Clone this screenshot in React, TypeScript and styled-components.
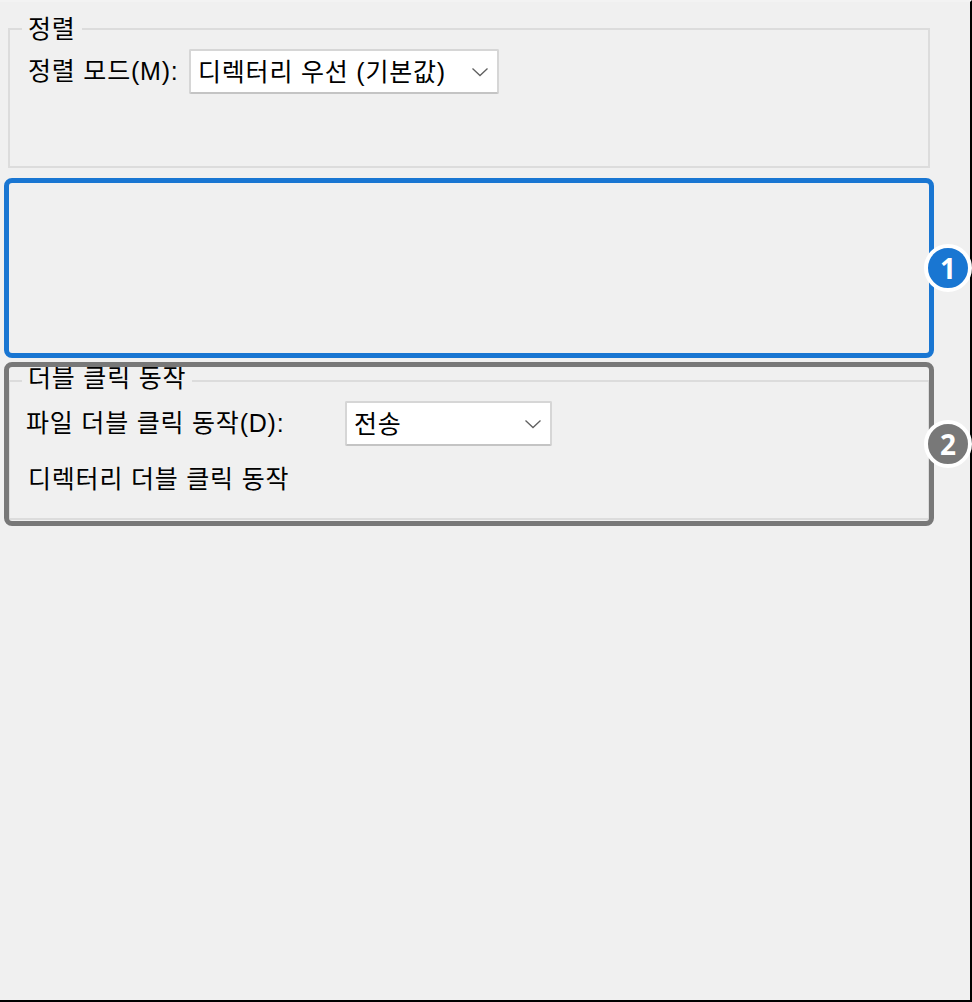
import styled, { createGlobalStyle } from "styled-components";

const GlobalStyle = createGlobalStyle`
  html, body {
    margin: 0;
    padding: 0;
    overflow: hidden;
    background: #f0f0f0;
  }
`;

const Page = styled.div`
  position: relative;
  box-sizing: border-box;
  width: 972px;
  height: 1002px;
  padding-top: 13px;
  background: #f0f0f0;
  border-top: 2px solid #f3f3f3;
  border-right: 2px solid #000;
  border-bottom: 2px solid #000;
  font-family: "Liberation Sans", "Noto Sans CJK KR", sans-serif;
  font-size: 25px;
  letter-spacing: 0.8px;
  color: #000;
`;

const Group = styled.fieldset<{ $height: number; $top: number }>`
  box-sizing: border-box;
  width: 922px;
  height: ${(p) => p.$height}px;
  margin: ${(p) => p.$top}px 0 0 8px;
  padding: 0;
  border: 2px solid #dcdcdc;
  min-width: 0;
`;

/* $lift raises the text above the border line by padding the legend's bottom */
const Legend = styled.legend<{ $lift?: number }>`
  margin-left: 12px;
  padding: 0 6px ${(p) => p.$lift ?? 0}px;
  line-height: 28px;
`;

const Content = styled.div<{ $top: number; $left: number }>`
  padding: ${(p) => p.$top}px 0 0 ${(p) => p.$left}px;
`;

const Row = styled.div`
  display: flex;
  align-items: center;
  height: 45px;
`;

const Label = styled.span<{ $width: number }>`
  width: ${(p) => p.$width}px;
  flex: none;
  padding-bottom: 5px;
  white-space: nowrap;
`;

const Combo = styled.div<{ $width: number }>`
  box-sizing: border-box;
  display: flex;
  align-items: center;
  justify-content: space-between;
  width: ${(p) => p.$width}px;
  height: 45px;
  padding: 0 8px 4px 7px;
  background: #fff;
  border: 2px solid #d6d6d6;
  border-bottom-color: #c4c4c4;
  border-radius: 2px;
  white-space: nowrap;
`;

const ComboArrow = styled.svg`
  flex: none;
  margin-top: 4px;
`;

const Plain = styled.div`
  margin: 17px 0 0 2px;
  line-height: 32px;
`;

const Highlight = styled.div<{ $color: string; $top: number; $height: number }>`
  position: absolute;
  box-sizing: border-box;
  left: 4px;
  top: ${(p) => p.$top}px;
  width: 930px;
  height: ${(p) => p.$height}px;
  border: 5px solid ${(p) => p.$color};
  border-radius: 8px;
`;

const Badge = styled.div<{ $color: string }>`
  position: absolute;
  box-sizing: border-box;
  right: -43px;
  top: 50%;
  width: 48px;
  height: 48px;
  margin-top: -24px;
  display: flex;
  align-items: center;
  justify-content: center;
  background: ${(p) => p.$color};
  border: 4px solid #fff;
  border-radius: 50%;
  color: #fff;
  font-family: "Open Sans", sans-serif;
  font-weight: 700;
  font-size: 28px;
  letter-spacing: 0;
  line-height: 1;
`;

const Chevron = () => (
  <ComboArrow width="18" height="10" viewBox="0 0 18 10" fill="none">
    <path d="M1.5 1.5 L9 8.5 L16.5 1.5" stroke="#606060" strokeWidth="1.3" />
  </ComboArrow>
);

export default function App() {
  return (
    <Page>
      <GlobalStyle />
      <Group $height={153} $top={0}>
        <Legend>정렬</Legend>
        <Content $top={6} $left={18}>
          <Row>
            <Label $width={161}>정렬 모드(M):</Label>
            <Combo $width={310}>
              디렉터리 우선 (기본값)
              <Chevron />
            </Combo>
          </Row>
        </Content>
      </Group>
      <Group $height={156} $top={196}>
        <Legend $lift={6}>더블 클릭 동작</Legend>
        <Content $top={3} $left={16}>
          <Row>
            <Label $width={319}>파일 더블 클릭 동작(D):</Label>
            <Combo $width={207}>
              전송
              <Chevron />
            </Combo>
          </Row>
          <Plain>디렉터리 더블 클릭 동작</Plain>
        </Content>
      </Group>
      <Highlight $color="#1976d2" $top={176} $height={180}>
        <Badge $color="#1976d2">1</Badge>
      </Highlight>
      <Highlight $color="#787878" $top={360} $height={164}>
        <Badge $color="#787878">2</Badge>
      </Highlight>
    </Page>
  );
}
